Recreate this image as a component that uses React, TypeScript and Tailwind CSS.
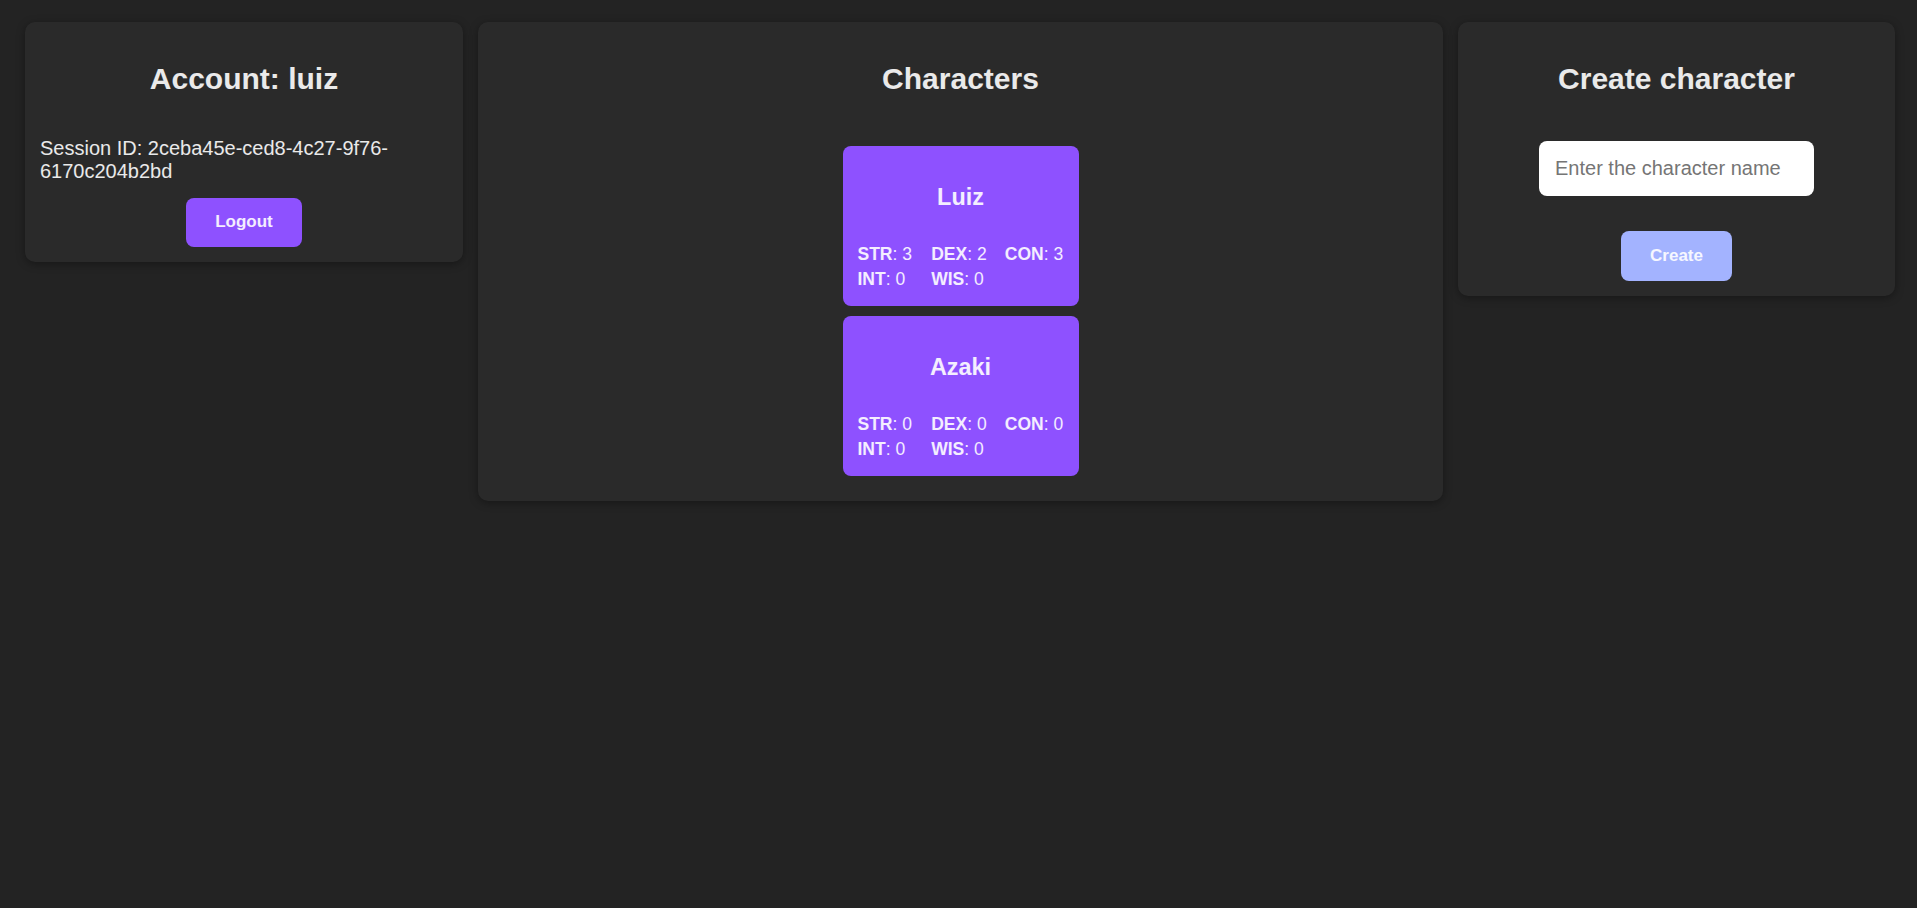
const characters = [
  { name: "Luiz", stats: { STR: 3, DEX: 2, CON: 3, INT: 0, WIS: 0 } },
  { name: "Azaki", stats: { STR: 0, DEX: 0, CON: 0, INT: 0, WIS: 0 } },
];

function CharacterCard({ name, stats }: { name: string; stats: Record<string, number> }) {
  return (
    <div className="flex w-[236px] flex-col rounded-[8px] bg-violet-500 px-[15px] pt-[15px] pb-[17px]">
      <h3 className="mt-[23px] mb-[23px] text-center text-[23.4px] font-bold leading-[1.15]">{name}</h3>
      <div className="mt-[10px] grid grid-cols-3 gap-x-[15px] gap-y-[5px] text-[17.5px] leading-[1.15]">
        {Object.entries(stats).map(([key, value]) => (
          <span key={key}>
            <strong>{key}</strong>: {value}
          </span>
        ))}
      </div>
    </div>
  );
}

export default function App() {
  return (
    <div
      className="min-h-screen bg-[#232323] text-white/90"
      style={{ fontFamily: '"Liberation Sans", Arial, sans-serif' }}
    >
      <div className="flex items-start gap-[15px] pt-[22px] pl-[25px] pr-[22px]">
        {/* Account */}
        <section className="flex w-[438px] flex-col items-center rounded-[10px] bg-[#2a2a2a] p-[15px] shadow-[0_2px_8px_rgba(0,0,0,0.35)]">
          <h2 className="my-[25px] text-[30px] font-bold leading-[1.15]">Account: luiz</h2>
          <p className="mt-[15px] self-stretch text-[20px] leading-[23px]">
            Session ID: 2ceba45e-ced8-4c27-9f76-6170c204b2bd
          </p>
          <button className="mt-[15px] h-[49px] rounded-[8px] bg-violet-500 px-[29px] text-[17px] font-bold">
            Logout
          </button>
        </section>

        {/* Characters */}
        <section className="flex flex-1 flex-col items-center rounded-[10px] bg-[#2a2a2a] px-[15px] pt-[15px] pb-[25px] shadow-[0_2px_8px_rgba(0,0,0,0.35)]">
          <h2 className="my-[25px] text-[30px] font-bold leading-[1.15]">Characters</h2>
          <div className="mt-[24.5px] flex flex-col gap-[10px]">
            {characters.map((c) => (
              <CharacterCard key={c.name} name={c.name} stats={c.stats} />
            ))}
          </div>
        </section>

        {/* Create */}
        <section className="flex w-[437px] flex-col items-center rounded-[10px] bg-[#2a2a2a] p-[15px] shadow-[0_2px_8px_rgba(0,0,0,0.35)]">
          <h2 className="my-[25px] text-[30px] font-bold leading-[1.15]">Create character</h2>
          <input
            type="text"
            placeholder="Enter the character name"
            className="mt-[19.5px] h-[55px] w-[275px] rounded-[8px] bg-white px-[16px] text-[20px] text-black outline-none placeholder:text-[#757575]"
          />
          <button className="mt-[35px] h-[50px] rounded-[8px] bg-indigo-300 px-[29px] text-[17px] font-bold">
            Create
          </button>
        </section>
      </div>
    </div>
  );
}
